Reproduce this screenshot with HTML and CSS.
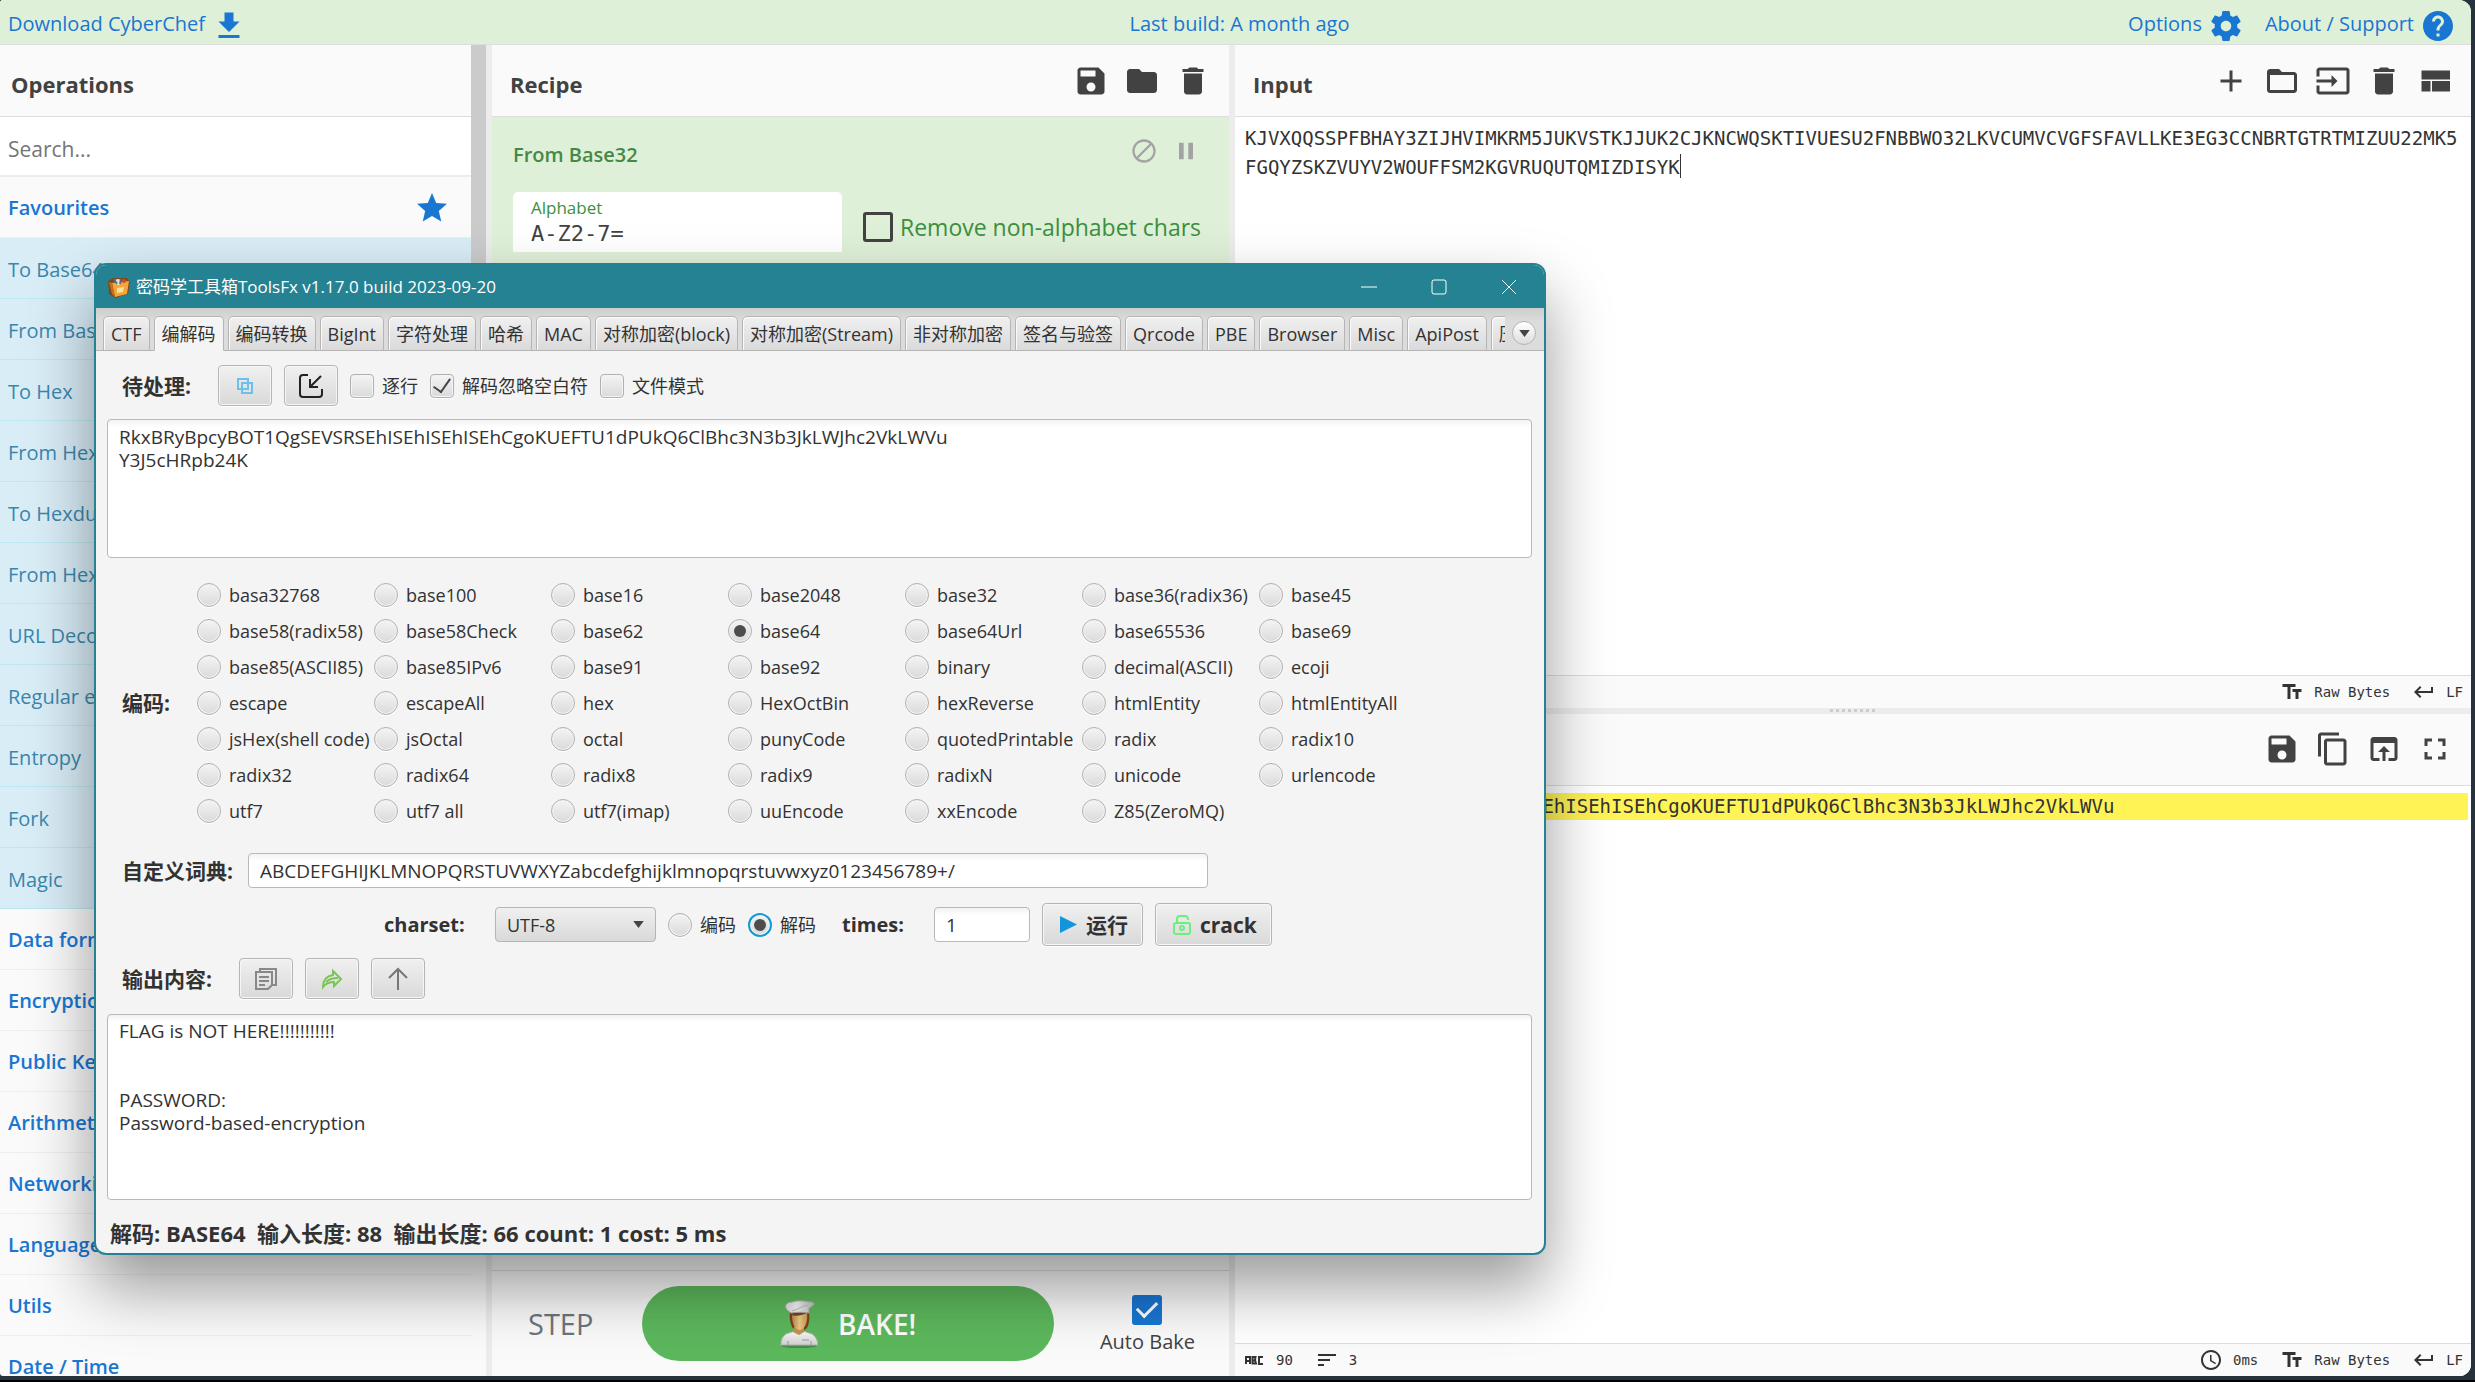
FILE: index.html
```html
<!DOCTYPE html>
<html lang="en">
<head>
<meta charset="utf-8">
<title>CyberChef</title>
<link rel="stylesheet" href="styles.css">
</head>
<body>
<svg class="sprite" aria-hidden="true">
  <symbol id="i-save" viewBox="0 0 24 24"><path d="M17 3H5c-1.1 0-2 .9-2 2v14c0 1.1.9 2 2 2h14c1.1 0 2-.9 2-2V7l-4-4zm-5 16c-1.7 0-3-1.3-3-3s1.3-3 3-3 3 1.3 3 3-1.3 3-3 3zm3-10H5V5h10v4z"/></symbol>
  <symbol id="i-folder" viewBox="0 0 24 24"><path d="M10 4H4c-1.1 0-2 .9-2 2v12c0 1.100.9 2 2 2h16c1.100 0 2-.9 2-2V8c0-1.100-.9-2-2-2h-8l-2-2z"/></symbol>
  <symbol id="i-trash" viewBox="0 0 24 24"><path d="M6 19c0 1.100.9 2 2 2h8c1.100 0 2-.9 2-2V7H6v12zM19 4h-3.500l-1-1h-5l-1 1H5v2h14V4z"/></symbol>
  <symbol id="i-return" viewBox="0 0 24 24"><path d="M19 7v4H5.830l3.580-3.590L8 6l-6 6 6 6 1.410-1.410L5.830 13H21V7z"/></symbol>
  <symbol id="i-text" viewBox="0 0 24 24"><path d="M2.500 4v3h5v12h3V7h5V4h-13zm19 5h-9v3h3v7h3v-7h3V9z"/></symbol>
</svg>

<div class="app">
  <header class="banner">
    <a class="banner-link" href="#download">Download CyberChef
      <svg class="icon" viewBox="0 0 24 24"><path d="M19 9h-4V3H9v6H5l7 7 7-7zM5 18v2h14v-2H5z"/></svg></a>
    <a class="banner-link" href="#build">Last build: A month ago</a>
    <nav class="banner-nav">
      <a class="banner-link" href="#options">Options
        <svg class="icon" viewBox="0 0 24 24"><path d="M19.430 12.980c.04-.32.07-.64.07-.98s-.03-.66-.07-.98l2.110-1.650c.19-.15.24-.42.12-.64l-2-3.460c-.12-.22-.39-.3-.61-.22l-2.490 1c-.52-.4-1.080-.73-1.690-.98l-.38-2.650C14.460 2.180 14.250 2 14 2h-4c-.25 0-.46.18-.49.42l-.38 2.650c-.61.25-1.170.59-1.690.98l-2.490-1c-.23-.09-.49 0-.61.22l-2 3.460c-.13.22-.07.49.12.64l2.110 1.650c-.04.32-.07.65-.07.98s.03.66.07.98l-2.110 1.650c-.19.15-.24.42-.12.64l2 3.460c.12.22.39.3.61.22l2.490-1c.52.4 1.080.73 1.690.98l.38 2.650c.03.24.24.42.49.42h4c.25 0 .46-.18.49-.42l.38-2.650c.61-.25 1.170-.59 1.690-.98l2.490 1c.23.09.49 0 .61-.22l2-3.460c.12-.22.07-.49-.12-.64l-2.110-1.650zM12 15.500c-1.930 0-3.500-1.570-3.500-3.500s1.570-3.500 3.500-3.500 3.500 1.570 3.500 3.500-1.570 3.500-3.500 3.500z"/></svg></a>
      <a class="banner-link" href="#about">About / Support
        <svg class="icon" viewBox="0 0 24 24"><path d="M12 2C6.480 2 2 6.480 2 12s4.480 10 10 10 10-4.480 10-10S17.520 2 12 2zm1 17h-2v-2h2v2zm2.070-7.750l-.9.920C13.450 12.900 13 13.500 13 15h-2v-.5c0-1.100.45-2.100 1.170-2.830l1.240-1.260c.37-.36.59-.86.59-1.410 0-1.100-.9-2-2-2s-2 .9-2 2H8c0-2.210 1.790-4 4-4s4 1.790 4 4c0 .88-.36 1.680-.93 2.250z"/></svg></a>
    </nav>
  </header>

  <main class="workspace">
    <section class="ops">
      <div class="ops-list">
        <div class="pane-head"><h2>Operations</h2></div>
        <input class="search" type="search" placeholder="Search..." aria-label="Search operations">
        <a class="category" href="#fav">Favourites
          <svg class="icon" viewBox="0 0 24 24"><path d="M12 17.270L18.180 21l-1.640-7.030L22 9.240l-7.190-.61L12 2 9.190 8.630 2 9.240l5.460 4.730L5.820 21z"/></svg></a>
        <ul class="favourites">
          <li>To Base64</li><li>From Base64</li><li>To Hex</li><li>From Hex</li><li>To Hexdump</li><li>From Hexdump</li><li>URL Decode</li><li>Regular expression</li><li>Entropy</li><li>Fork</li><li>Magic</li>
        </ul>
        <a class="category" href="#c1">Data format</a>
        <a class="category" href="#c2">Encryption / Encoding</a>
        <a class="category" href="#c3">Public Key</a>
        <a class="category" href="#c4">Arithmetic / Logic</a>
        <a class="category" href="#c5">Networking</a>
        <a class="category" href="#c6">Language</a>
        <a class="category" href="#c7">Utils</a>
        <a class="category" href="#c8">Date / Time</a>
      </div>
      <div class="scroll-track"><div class="scroll-thumb"></div></div>
    </section>
    <div class="gutter"></div>

    <section class="recipe">
      <div class="pane-head"><h2>Recipe</h2>
        <div class="tools">
          <button aria-label="Save recipe"><svg class="icon"><use href="#i-save"/></svg></button>
          <button aria-label="Load recipe"><svg class="icon"><use href="#i-folder"/></svg></button>
          <button aria-label="Clear recipe"><svg class="icon"><use href="#i-trash"/></svg></button>
        </div>
      </div>
      <article class="operation">
        <div class="operation-head"><h3>From Base32</h3>
          <div class="operation-tools">
            <button aria-label="Disable"><svg viewBox="0 0 24 24"><path d="M12 2C6.480 2 2 6.480 2 12s4.480 10 10 10 10-4.480 10-10S17.520 2 12 2zM4 12c0-4.420 3.580-8 8-8 1.850 0 3.550.63 4.900 1.690L5.690 16.900C4.630 15.550 4 13.850 4 12zm8 8c-1.850 0-3.550-.63-4.900-1.690L18.310 7.100C19.370 8.450 20 10.150 20 12c0 4.420-3.580 8-8 8z"/></svg></button>
            <button aria-label="Breakpoint"><svg viewBox="0 0 24 24"><path d="M6 19h4V5H6v14zm8-14v14h4V5h-4z"/></svg></button>
          </div>
        </div>
        <div class="args">
          <label class="arg-text">Alphabet<input type="text" value="A-Z2-7="></label>
          <label class="arg-check"><input class="box" type="checkbox">Remove non-alphabet chars</label>
        </div>
      </article>
      <footer class="controls">
        <button class="step">STEP</button>
        <button class="bake">
          <svg class="chef" viewBox="0 0 38 48">
            <defs>
              <linearGradient id="hat" x1="0" x2="1"><stop offset="0" stop-color="#ddd"/><stop offset=".4" stop-color="#f4f4f4"/><stop offset="1" stop-color="#bbb"/></linearGradient>
              <linearGradient id="face" x1="0" x2="1"><stop offset="0" stop-color="#b98a4e"/><stop offset=".5" stop-color="#ecca86"/><stop offset="1" stop-color="#c99c58"/></linearGradient>
              <linearGradient id="coat" x1="0" y1="0" x2="0" y2="1"><stop offset="0" stop-color="#fafafa"/><stop offset="1" stop-color="#d0d0d0"/></linearGradient>
            </defs>
            <ellipse cx="19" cy="46" rx="18" ry="2" fill="#2f5f2f" opacity=".5"/>
            <path d="M1 45c0-7 3-11 8-12l6-2h8l6 2c5 1 8 5 9 12z" fill="url(#coat)" stroke="#b5b5b5"/>
            <path d="M10 12h19c1 6 0 12-2 16l-4 3h-7l-4-4c-2-5-3-10-2-15z" fill="#7d4218"/>
            <path d="M14 27h10v5l-5 3-6-3z" fill="#c4924f"/>
            <path d="M12 15c5 2 10 0 15-2 1 9-2 17-8 17-5-1-7-8-7-15z" fill="url(#face)"/>
            <path d="M7 10C4 6 6 2 12 2c5-2 12-1 20 0 4 1 2 4-3 6v5c-6-1-12-1-18 0z" fill="url(#hat)" stroke="#aaa"/>
            <path d="M12 11c6-1 9-5 16-6" stroke="#bbb" fill="none"/>
            <path d="M8 41v4M31 41v4M22 40h7" stroke="#999" fill="none"/>
          </svg>BAKE!</button>
        <label class="auto-bake"><input class="box" type="checkbox" checked>Auto Bake</label>
      </footer>
    </section>
    <div class="gutter"></div>

    <section class="io">
      <div class="io-pane io-input">
        <div class="pane-head"><h2>Input</h2>
          <div class="tools">
            <button aria-label="Add tab"><svg class="icon" viewBox="0 0 24 24"><path d="M19 13h-6v6h-2v-6H5v-2h6V5h2v6h6v2z"/></svg></button>
            <button aria-label="Open folder"><svg class="icon" viewBox="0 0 24 24"><path d="M20 6h-8l-2-2H4c-1.100 0-1.990.9-1.990 2L2 18c0 1.100.9 2 2 2h16c1.100 0 2-.9 2-2V8c0-1.100-.9-2-2-2zm0 12H4V8h16v10z"/></svg></button>
            <button aria-label="Open file"><svg class="icon" viewBox="0 0 24 24"><path d="M21 3.010H3c-1.100 0-2 .9-2 2V9h2V4.990h18v14.030H3V15H1v4.010c0 1.100.9 1.980 2 1.980h18c1.100 0 2-.88 2-1.980v-14c0-1.110-.9-2-2-2zM11 16l4-4-4-4v3H1v2h10v3z"/></svg></button>
            <button aria-label="Clear"><svg class="icon"><use href="#i-trash"/></svg></button>
            <button aria-label="Reset layout"><svg class="icon" viewBox="0 0 24 24"><path d="M3 19h6v-7H3v7zm7 0h12v-7H10v7zM3 5v6h19V5H3z"/></svg></button>
          </div>
        </div>
        <div class="editor">
          <textarea class="code" aria-label="Input" spellcheck="false">KJVXQQSSPFBHAY3ZIJHVIMKRM5JUKVSTKJJUK2CJKNCWQSKTIVUESU2FNBBWO32LKVCUMVCVGFSFAVLLKE3EG3CCNBRTGTRTMIZUU22MK5FGQYZSKZVUYV2WOUFFSM2KGVRUQUTQMIZDISYK</textarea>
          <span class="caret"></span>
        </div>
        <div class="status">
          <span class="stat push"><svg><use href="#i-text"/></svg>Raw Bytes</span>
          <span class="stat"><svg><use href="#i-return"/></svg>LF</span>
        </div>
      </div>
      <div class="gutter-row"><span class="grip"></span></div>
      <div class="io-pane io-output">
        <div class="pane-head"><h2>Output</h2>
          <div class="tools">
            <button aria-label="Save output"><svg class="icon"><use href="#i-save"/></svg></button>
            <button aria-label="Copy output"><svg class="icon" viewBox="0 0 24 24"><path d="M16 1H4c-1.100 0-2 .9-2 2v14h2V3h12V1zm3 4H8c-1.100 0-2 .9-2 2v14c0 1.100.9 2 2 2h11c1.100 0 2-.9 2-2V7c0-1.100-.9-2-2-2zm0 16H8V7h11v14z"/></svg></button>
            <button aria-label="Replace input"><svg class="icon" viewBox="0 0 24 24"><path d="M19 4H5c-1.110 0-2 .9-2 2v12c0 1.100.89 2 2 2h4v-2H5V8h14v10h-4v2h4c1.100 0 2-.9 2-2V6c0-1.100-.89-2-2-2zm-7 6l-4 4h3v6h2v-6h3l-4-4z"/></svg></button>
            <button aria-label="Maximise"><svg class="icon" viewBox="0 0 24 24"><path d="M7 14H5v5h5v-2H7v-3zm-2-4h2V7h3V5H5v5zm12 7h-3v2h5v-5h-2v3zM14 5v2h3v3h2V5h-5z"/></svg></button>
          </div>
        </div>
        <div class="output-text">
          <div class="line active">RkxBRyBpcyBOT1QgSEVSRSEhISEhISEhISEhCgoKUEFTU1dPUkQ6ClBhc3N3b3JkLWJhc2VkLWVu</div>
          <div class="line">Y3J5cHRpb24K</div>
        </div>
        <div class="status">
          <span class="stat"><svg viewBox="0 0 24 24" class="abc"><path d="M4 16V9h4v7M4 13h4M10.500 9h3l-.5 3 1 3.500h-3.500zM10.500 12.500h3M21 9h-4v7h4"/></svg>90</span>
          <span class="stat"><svg viewBox="0 0 24 24"><path d="M3 18h6v-2H3v2zM3 6v2h18V6H3zm0 7h12v-2H3v2z"/></svg>3</span>
          <span class="stat push"><svg viewBox="0 0 24 24"><path d="M11.990 2C6.470 2 2 6.480 2 12s4.470 10 9.990 10C17.520 22 22 17.520 22 12S17.520 2 11.990 2zM12 20c-4.420 0-8-3.580-8-8s3.580-8 8-8 8 3.580 8 8-3.580 8-8 8zM12.500 7H11v6l5.250 3.150.75-1.230-4.500-2.670z"/></svg>0ms</span>
          <span class="stat"><svg><use href="#i-text"/></svg>Raw Bytes</span>
          <span class="stat"><svg><use href="#i-return"/></svg>LF</span>
        </div>
      </div>
    </section>
  </main>
</div>

<div class="window" role="dialog" aria-labelledby="win-title" lang="zh-CN">
  <div class="titlebar">
    <svg class="app-icon" viewBox="0 0 24 22">
      <path d="M1 5l5-3 14 0 3 4-2 12-13 4-6-4z" fill="#7a4a1c"/>
      <path d="M5 7l17-2-2 13-12 3z" fill="#f3a63a"/>
      <path d="M5 7L2 6l3 12 3 3z" fill="#c9701b"/>
      <circle cx="11" cy="6" r="3" fill="#e9e2d0"/><circle cx="17" cy="5" r="2" fill="#d64a2e"/>
      <path d="M10 12l7-1-1 5-6 1z" fill="#fbe0a0"/><path d="M7 3l3 5M14 3l-1 5" stroke="#4f6f8a" stroke-width="2"/>
    </svg>
    <span id="win-title" class="title">密码学工具箱ToolsFx v1.17.0 build 2023-09-20</span>
    <button aria-label="Minimize"><svg viewBox="0 0 16 16"><path d="M0 8h16"/></svg></button>
    <button aria-label="Maximize"><svg viewBox="0 0 16 16"><rect x="1" y="1" width="14" height="14" rx="2"/></svg></button>
    <button aria-label="Close"><svg viewBox="0 0 16 16"><path d="M1 1l14 14M15 1L1 15"/></svg></button>
  </div>
  <div class="tabstrip">
    <div class="tabs" role="tablist">
      <button role="tab">CTF</button><button role="tab" class="current" aria-selected="true">编解码</button><button role="tab">编码转换</button><button role="tab">BigInt</button><button role="tab">字符处理</button><button role="tab">哈希</button><button role="tab">MAC</button><button role="tab">对称加密(block)</button><button role="tab">对称加密(Stream)</button><button role="tab">非对称加密</button><button role="tab">签名与验签</button><button role="tab">Qrcode</button><button role="tab">PBE</button><button role="tab">Browser</button><button role="tab">Misc</button><button role="tab">ApiPost</button><button role="tab">压缩</button>
    </div>
    <button class="tab-menu" aria-label="More tabs"><svg viewBox="0 0 12 8"><path d="M0 0h12L6 8z"/></svg></button>
  </div>

  <div class="panel">
    <div class="row row-source">
      <span class="label">待处理:</span>
      <button class="fx-btn" aria-label="Copy"><svg viewBox="0 0 20 20" fill="none" stroke="#6cc0ea" stroke-width="2"><rect x="3" y="3" width="10" height="10"/><rect x="7" y="7" width="10" height="10"/></svg></button>
      <button class="fx-btn" aria-label="Import"><svg class="big" viewBox="0 0 24 24" fill="none" stroke="#222" stroke-width="2"><path d="M9 1H4Q1 1 1 4v16q0 3 3 3h16q3 0 3-3v-5M22 2L11 13M11 5v8h8"/></svg></button>
      <label class="choice"><input class="fx-check" type="checkbox">逐行</label>
      <label class="choice"><input class="fx-check" type="checkbox" checked>解码忽略空白符</label>
      <label class="choice"><input class="fx-check" type="checkbox">文件模式</label>
    </div>

    <textarea class="fx-area source" aria-label="待处理" spellcheck="false">RkxBRyBpcyBOT1QgSEVSRSEhISEhISEhISEhCgoKUEFTU1dPUkQ6ClBhc3N3b3JkLWJhc2VkLWVu
Y3J5cHRpb24K</textarea>

    <div class="row row-codecs">
      <span class="label">编码:</span>
      <div class="codecs">
        <label class="choice"><input type="radio" name="codec">basa32768</label>
        <label class="choice"><input type="radio" name="codec">base100</label>
        <label class="choice"><input type="radio" name="codec">base16</label>
        <label class="choice"><input type="radio" name="codec">base2048</label>
        <label class="choice"><input type="radio" name="codec">base32</label>
        <label class="choice"><input type="radio" name="codec">base36(radix36)</label>
        <label class="choice"><input type="radio" name="codec">base45</label>
        <label class="choice"><input type="radio" name="codec">base58(radix58)</label>
        <label class="choice"><input type="radio" name="codec">base58Check</label>
        <label class="choice"><input type="radio" name="codec">base62</label>
        <label class="choice"><input type="radio" name="codec" checked>base64</label>
        <label class="choice"><input type="radio" name="codec">base64Url</label>
        <label class="choice"><input type="radio" name="codec">base65536</label>
        <label class="choice"><input type="radio" name="codec">base69</label>
        <label class="choice"><input type="radio" name="codec">base85(ASCII85)</label>
        <label class="choice"><input type="radio" name="codec">base85IPv6</label>
        <label class="choice"><input type="radio" name="codec">base91</label>
        <label class="choice"><input type="radio" name="codec">base92</label>
        <label class="choice"><input type="radio" name="codec">binary</label>
        <label class="choice"><input type="radio" name="codec">decimal(ASCII)</label>
        <label class="choice"><input type="radio" name="codec">ecoji</label>
        <label class="choice"><input type="radio" name="codec">escape</label>
        <label class="choice"><input type="radio" name="codec">escapeAll</label>
        <label class="choice"><input type="radio" name="codec">hex</label>
        <label class="choice"><input type="radio" name="codec">HexOctBin</label>
        <label class="choice"><input type="radio" name="codec">hexReverse</label>
        <label class="choice"><input type="radio" name="codec">htmlEntity</label>
        <label class="choice"><input type="radio" name="codec">htmlEntityAll</label>
        <label class="choice"><input type="radio" name="codec">jsHex(shell code)</label>
        <label class="choice"><input type="radio" name="codec">jsOctal</label>
        <label class="choice"><input type="radio" name="codec">octal</label>
        <label class="choice"><input type="radio" name="codec">punyCode</label>
        <label class="choice"><input type="radio" name="codec">quotedPrintable</label>
        <label class="choice"><input type="radio" name="codec">radix</label>
        <label class="choice"><input type="radio" name="codec">radix10</label>
        <label class="choice"><input type="radio" name="codec">radix32</label>
        <label class="choice"><input type="radio" name="codec">radix64</label>
        <label class="choice"><input type="radio" name="codec">radix8</label>
        <label class="choice"><input type="radio" name="codec">radix9</label>
        <label class="choice"><input type="radio" name="codec">radixN</label>
        <label class="choice"><input type="radio" name="codec">unicode</label>
        <label class="choice"><input type="radio" name="codec">urlencode</label>
        <label class="choice"><input type="radio" name="codec">utf7</label>
        <label class="choice"><input type="radio" name="codec">utf7 all</label>
        <label class="choice"><input type="radio" name="codec">utf7(imap)</label>
        <label class="choice"><input type="radio" name="codec">uuEncode</label>
        <label class="choice"><input type="radio" name="codec">xxEncode</label>
        <label class="choice"><input type="radio" name="codec">Z85(ZeroMQ)</label>
      </div>
    </div>

    <div class="row row-dict">
      <label class="label" for="dict">自定义词典:</label>
      <input id="dict" class="fx-input" type="text" value="ABCDEFGHIJKLMNOPQRSTUVWXYZabcdefghijklmnopqrstuvwxyz0123456789+/">
    </div>

    <div class="row row-run">
      <label class="label" for="charset">charset:</label>
      <div class="combo">
        <select id="charset"><option>UTF-8</option></select>
        <svg viewBox="0 0 12 8"><path d="M0 0h12L6 8z"/></svg>
      </div>
      <label class="choice"><input type="radio" name="mode">编码</label>
      <label class="choice"><input class="focused" type="radio" name="mode" checked>解码</label>
      <label class="label times" for="times">times:</label>
      <input id="times" class="fx-input" type="text" value="1">
      <button class="fx-btn text"><svg viewBox="0 0 16 16"><path d="M0 0l16 8-16 8z" fill="#1296db"/></svg>运行</button>
      <button class="fx-btn text"><svg class="lock" viewBox="0 0 18 20" fill="none" stroke="#6cf07c" stroke-width="2"><rect x="1" y="8" width="16" height="11" rx="2"/><path d="M4 8V4q0-3 3-3h5q3 0 3 4"/><circle cx="9" cy="13" r="2"/></svg>crack</button>
    </div>

    <div class="row row-output">
      <span class="label">输出内容:</span>
      <button class="fx-btn" aria-label="Copy result"><svg class="big" viewBox="0 0 24 24" fill="none" stroke="#888" stroke-width="2"><path d="M6 5V2h16v16h-3"/><path d="M2 5h16v13l-4 4H2zM5 10h10M5 14h10M5 18h6"/></svg></button>
      <button class="fx-btn" aria-label="Send up"><svg class="big" viewBox="0 0 24 24" fill="none" stroke="#79c653" stroke-width="2"><path d="M13 4l8 8-7 7v-4c-5 0-8 1-11 5 0-7 4-11 10-12z"/><path d="M6 15c3-3 6-4 12-4"/></svg></button>
      <button class="fx-btn" aria-label="Up"><svg class="big" viewBox="0 0 24 24" fill="none" stroke="#777" stroke-width="2"><path d="M12 23V2M3 11l9-9 9 9"/></svg></button>
    </div>

    <textarea class="fx-area result" aria-label="输出内容" spellcheck="false">FLAG is NOT HERE!!!!!!!!!!!


PASSWORD:
Password-based-encryption</textarea>

    <div class="summary">解码: BASE64&nbsp; 输入长度: 88&nbsp; 输出长度: 66 count: 1 cost: 5 ms</div>
  </div>
</div>
</body>
</html>
```
FILE: styles.css
```css
* { box-sizing: border-box; }

:root {
  --sans: "Open Sans", "Noto Sans CJK SC", sans-serif;
  --mono: "DejaVu Sans Mono", "Liberation Mono", monospace;
  --blue: #1976d2;
  --ink: #424242;
  --teal: #258292;
}

body {
  margin: 0;
  height: 100vh;
  overflow: hidden;
  position: relative;
  background: #27323f;
  border-bottom: 2px solid #000;
  padding: 0 4px 4px 0;
  font: 20px/28px var(--sans);
  color: var(--ink);
}

button, input, textarea, select { font: inherit; color: inherit; }
button { border: 0; background: none; padding: 0; cursor: pointer; }
h2, h3, ul { margin: 0; padding: 0; }
a { text-decoration: none; }
.sprite { display: none; }
.icon { width: 36px; height: 36px; fill: currentColor; display: block; flex: none; }

/* page frame */
.app {
  height: 100%;
  display: flex;
  flex-direction: column;
  overflow: hidden;
  background: #fafafa;
  border-radius: 3px 12px 12px 3px;
}

.banner {
  flex: none;
  height: 45px;
  display: grid;
  grid-template-columns: 1fr auto 1fr;
  align-items: start;
  padding: 8px 0 0 8px;
  background: #dff0d8;
  border-bottom: 1px solid #ddd;
}
.banner-link { display: flex; gap: 6px; height: 36px; line-height: 32px; color: var(--blue); }
.banner-nav { display: flex; justify-content: flex-end; gap: 21px; padding-right: 15px; }

.workspace { flex: 1; min-height: 0; display: flex; }
.gutter { flex: none; width: 6px; background: #ececec; }

.pane-head {
  flex: none;
  height: 72px;
  display: flex;
  align-items: center;
  justify-content: space-between;
  padding: 0 18px 0 11px;
  background: #fafafa;
  border-bottom: 1px solid #ddd;
}
.pane-head h2 { font-size: 22px; font-weight: 700; line-height: 32px; padding-top: 6px; }
.recipe .pane-head, .io .pane-head { padding-left: 18px; }
.tools { display: flex; gap: 15px; }

/* operations */
.ops { flex: 486 1 0; display: flex; min-width: 0; }
.ops-list { flex: 1; display: flex; flex-direction: column; overflow: hidden; }
.scroll-track { width: 15px; flex: none; }
.scroll-thumb { height: 85%; background: #cbcbcb; }
.search {
  flex: none;
  height: 60px;
  width: 100%;
  border: 0;
  border-bottom: 2px solid #ececec;
  padding: 6px 8px 0;
  background: #fff;
  font-size: 21px;
  outline: 0;
}
.search::placeholder { color: #757575; }
.category {
  flex: none;
  height: 61px;
  display: flex;
  align-items: center;
  justify-content: space-between;
  padding: 2px 21px 0 8px;
  color: var(--blue);
  font-weight: 600;
  border-bottom: 1px solid #eee;
}
.favourites { list-style: none; flex: none; }
.favourites li {
  height: 61px;
  padding: 18px 8px 0;
  color: #3a87ad;
  background: #d9edf7;
  border-bottom: 1px solid #bce8f1;
}

/* recipe */
.recipe { flex: 737 1 0; min-width: 0; display: flex; flex-direction: column; }
.operation { background: #dff0d8; padding: 20px 21px 24px; height: 220px; color: #468847; }
.operation-head { display: flex; justify-content: space-between; height: 55px; }
.operation-head h3 { font-size: 20px; font-weight: 600; line-height: 36px; }
.operation-tools { display: flex; gap: 14px; padding-right: 8px; }
.operation-tools button { height: 28px; }
.operation-tools svg { width: 28px; height: 28px; fill: #a3a3a3; display: block; }
.args { display: flex; align-items: flex-start; gap: 21px; }
.arg-text {
  width: 329px;
  height: 60px;
  padding: 4px 18px;
  background: #fff;
  border-radius: 5px 5px 0 0;
  font-size: 17px;
  line-height: 24px;
  color: #3c8f40;
}
.arg-text input {
  display: block;
  width: 100%;
  height: 28px;
  padding: 0;
  border: 0;
  outline: 0;
  background: none;
  color: var(--ink);
  font: 22px/28px var(--mono);
}
.arg-check { display: flex; align-items: center; gap: 7px; padding-top: 19px; font-size: 23px; line-height: 32px; color: #3c8f40; white-space: nowrap; }
.box { appearance: none; margin: 0; width: 30px; height: 30px; flex: none; border: 3px solid var(--ink); border-radius: 3px; }
.box:checked { background: var(--blue); border-color: var(--blue); display: grid; place-items: center; }
.box:checked::after { content: ""; width: 9px; height: 17px; border: solid #fff; border-width: 0 3px 3px 0; rotate: 45deg; translate: 0 -3px; }

.controls {
  margin-top: auto;
  height: 106px;
  display: flex;
  align-items: flex-start;
  padding: 15px 34px 0 36px;
  border-top: 1px solid #ddd;
  background: #fafafa;
}
.step { font-size: 29px; line-height: 76px; color: #6c757d; }
.bake {
  flex: 1;
  height: 75px;
  margin: 0 46px 0 49px;
  padding: 0;
  display: flex;
  align-items: center;
  justify-content: center;
  gap: 20px;
  border-radius: 38px;
  background: #5cb85c;
  color: #fff;
  font-size: 28px;
  font-weight: 600;
}
.chef { width: 38px; height: 48px; }
.auto-bake { display: flex; flex-direction: column; align-items: center; padding-top: 9px; gap: 3px; }

/* input and output */
.io { flex: 1236 1 0; min-width: 0; display: flex; flex-direction: column; background: #fff; }
.io-pane { display: flex; flex-direction: column; min-height: 0; }
.io-input, .io-output { flex: 1 1 0; }
.gutter-row { flex: none; height: 6px; background: #ececec; display: grid; place-items: center; }
.grip { width: 46px; height: 3px; background: repeating-linear-gradient(90deg, #ccc 0 3px, transparent 3px 6px); }
.editor { flex: 1; position: relative; display: flex; font: 19px/29px var(--mono); }
.code {
  flex: 1;
  margin: 0;
  padding: 7px 4px 0 10px;
  border: 0;
  outline: 0;
  resize: none;
  overflow: hidden;
  background: none;
  color: #333;
  word-break: break-all;
}
.caret { position: absolute; left: calc(10px + 38ch); top: 37px; width: 1px; height: 24px; background: #333; }
.output-text { flex: 1; padding: 7px 3px 0 0; font: 19px/27px var(--mono); color: #333; }
.line { padding-left: 10px; }
.line.active { background: #fff356; }
.status {
  flex: none;
  height: 33px;
  display: flex;
  align-items: center;
  gap: 22px;
  padding: 0 8px 0 7px;
  border-top: 1px solid #ddd;
  background: #fafafa;
  font: 14px/20px var(--mono);
  color: #333;
}
.stat { display: flex; align-items: center; gap: 10px; }
.stat svg { width: 24px; height: 24px; fill: #333; }
.stat .abc { fill: none; stroke: #333; stroke-width: 2; }
.push { margin-left: auto; }

/* floating desktop window */
.window {
  position: absolute;
  left: 94px;
  top: 263px;
  width: min(1452px, 96vw);
  border: 2px solid var(--teal);
  border-radius: 12px;
  overflow: hidden;
  background: #f4f4f4;
  box-shadow: 0 32px 64px rgba(0, 0, 0, .4);
  font: 18px/24px var(--sans);
  color: #323232;
}
.titlebar { height: 43px; display: flex; align-items: center; background: var(--teal); color: #fff; padding-left: 11px; }
.app-icon { width: 24px; height: 22px; margin-right: 5px; }
.title { flex: 1; font-size: 17px; }
.titlebar button { width: 70px; height: 43px; display: grid; place-items: center; }
.titlebar button svg { width: 16px; height: 16px; fill: none; stroke: #fff; stroke-width: 1; }

.tabstrip {
  height: 43px;
  display: flex;
  align-items: flex-end;
  padding: 0 8px 0 7px;
  background: linear-gradient(#cdcdcd, #dcdcdc 30%);
  box-shadow: inset 0 -1px #b5b5b5;
}
.tabs { flex: 1; min-width: 0; display: flex; gap: 4px; overflow: hidden; }
.tabs button {
  flex: none;
  height: 35px;
  padding: 0 7px;
  border: 1px solid #b5b5b5;
  border-radius: 5px 5px 0 0;
  background: linear-gradient(#f0f0f0, #dadada);
  box-shadow: inset 1px 1px #fafafa;
  white-space: nowrap;
}
.tabs .current { background: #f4f4f4; border-bottom-color: #f4f4f4; }
.tab-menu { width: 24px; height: 24px; margin: 0 0 6px 7px; border: 1px solid #b5b5b5; border-radius: 50%; background: linear-gradient(#fff, #ddd); display: grid; place-items: center; }
.tab-menu svg { width: 11px; height: 7px; fill: #444; }

.panel { padding: 14px 12px 6px 11px; }
.row { display: flex; align-items: center; padding-left: 15px; }
.label { flex: none; font-size: 21px; font-weight: 700; white-space: nowrap; }
.choice { display: flex; align-items: center; gap: 8px; white-space: nowrap; }

.fx-check, .choice input[type="radio"] {
  appearance: none;
  flex: none;
  margin: 0;
  width: 24px;
  height: 24px;
  border: 1px solid #b0b0b0;
  background: linear-gradient(#f4f4f4, #dadada);
  box-shadow: inset 0 0 0 1px #f4f4f4, 0 1px #fff;
  display: grid;
  place-items: center;
}
.fx-check { border-radius: 4px; }
.fx-check:checked::after { content: ""; width: 8px; height: 15px; border: solid #444; border-width: 0 2px 2px 0; rotate: 35deg; translate: 0 -2px; }
.choice input[type="radio"] { border-radius: 50%; }
.choice input[type="radio"]:checked::after { content: ""; width: 12px; height: 12px; border-radius: 50%; background: #4d4d4d; }
.choice input.focused { border: 2px solid #0f9bd7; }

.fx-btn {
  flex: none;
  width: 54px;
  height: 41px;
  border: 1px solid #b5b5b5;
  border-radius: 4px;
  background: linear-gradient(#f0f0f0, #d9d9d9);
  box-shadow: inset 0 0 0 1px #f6f6f6, 0 1px #fff;
  display: flex;
  align-items: center;
  justify-content: center;
}
.fx-btn svg { width: 20px; height: 20px; }
.fx-btn svg.big { width: 24px; height: 24px; }
.fx-btn.text { width: auto; height: 43px; padding: 0 14px 0 17px; gap: 9px; font-size: 21px; font-weight: 700; }
.fx-btn.text svg { width: 17px; height: 17px; }
.fx-btn.text svg.lock { width: 18px; height: 20px; }

.fx-area, .fx-input {
  border: 1px solid #b9b9b9;
  border-radius: 4px;
  background: linear-gradient(#f2f2f2, #fff 7px);
  outline: 0;
  font-size: 19px;
}
.fx-area { display: block; width: 100%; margin: 0; padding: 6px 11px; line-height: 23px; resize: none; overflow: hidden; }
.fx-input { height: 35px; padding: 0 11px; }

.row-source { gap: 12px; margin-bottom: 13px; }
.row-source .label { min-width: 84px; }
.source { height: 139px; }
.row-codecs { margin: 19px 0 24px; gap: 26px; }
.row-codecs .label { min-width: 49px; }
.codecs { display: grid; grid-template-columns: repeat(7, 177px); grid-auto-rows: 36px; }
.row-dict { gap: 14px; margin-bottom: 15px; }
.row-dict .label { min-width: 112px; }
.row-dict .fx-input { width: 960px; }
.row-run { gap: 12px; padding-left: 277px; margin-bottom: 12px; }
.row-run .label { min-width: 99px; font-size: 20px; }
.row-run .times { min-width: 80px; margin-left: 14px; }
.row-run .fx-input { width: 96px; }
.combo { position: relative; width: 161px; }
.combo select {
  appearance: none;
  width: 100%;
  height: 35px;
  padding: 0 11px;
  border: 1px solid #b5b5b5;
  border-radius: 4px;
  background: linear-gradient(#f0f0f0, #d9d9d9);
}
.combo svg { position: absolute; right: 12px; top: 14px; width: 11px; height: 7px; fill: #444; pointer-events: none; }
.row-output { gap: 12px; margin-bottom: 15px; }
.row-output .label { min-width: 105px; }
.result { height: 186px; padding-top: 5px; }
.summary { margin-top: 19px; padding-left: 3px; font-size: 22px; font-weight: 700; line-height: 28px; }
```
